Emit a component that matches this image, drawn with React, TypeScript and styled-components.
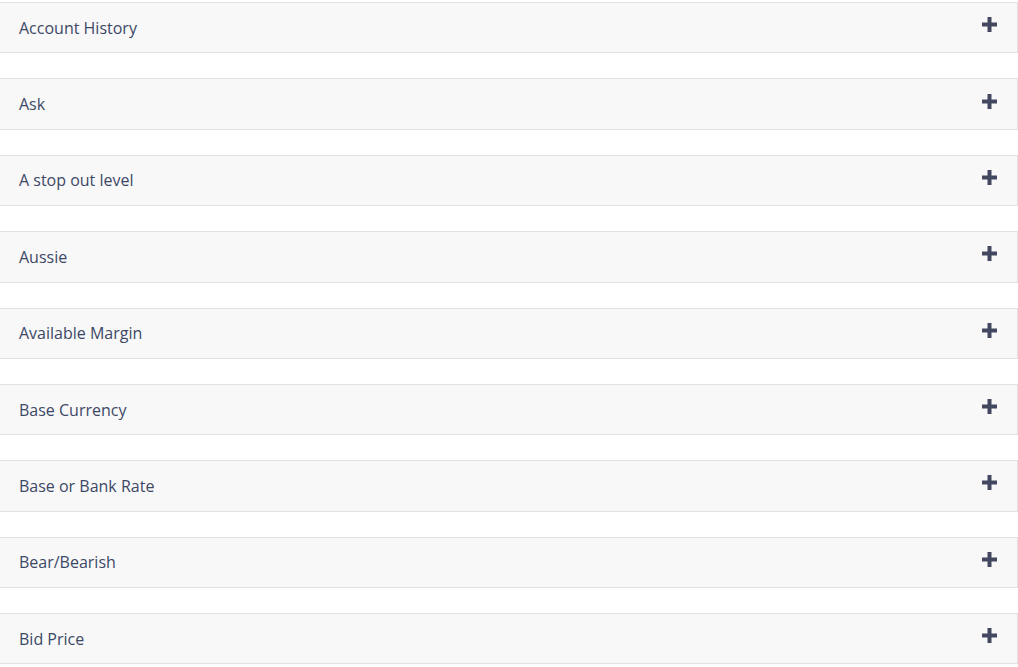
import React from 'react'
import styled, { createGlobalStyle } from 'styled-components'

const GlobalStyle = createGlobalStyle`
  body {
    margin: 0;
    background: #ffffff;
    font-family: "Open Sans", "Liberation Sans", sans-serif;
  }
`

const List = styled.div`
  padding-top: 2px;
`

const Item = styled.div`
  border: 1px solid #e1e1e1;
  border-left: none;
  background: #f8f8f8;
  height: 51.375px;
  box-sizing: border-box;
  margin-bottom: 25px;
`

const Header = styled.button`
  width: 100%;
  height: 100%;
  display: flex;
  align-items: center;
  justify-content: space-between;
  padding: 0 20px 0 19px;
  border: none;
  background: transparent;
  font-family: inherit;
  font-size: 16px;
  color: #3d4866;
  cursor: pointer;
  text-align: left;
`

const Title = styled.span`
  line-height: 24px;
`

const Plus = styled.svg`
  width: 15px;
  height: 15px;
  margin-top: -6px;
  flex-shrink: 0;
`

const terms = [
  'Account History',
  'Ask',
  'A stop out level',
  'Aussie',
  'Available Margin',
  'Base Currency',
  'Base or Bank Rate',
  'Bear/Bearish',
  'Bid Price',
]

const App: React.FC = () => {
  return (
    <>
      <GlobalStyle />
      <List>
        {terms.map((t) => (
          <Item key={t}>
            <Header>
              <Title>{t}</Title>
              <Plus viewBox="0 0 15 15">
                <rect x="5.5" y="0" width="4" height="15" fill="#43475f" />
                <rect x="0" y="5.5" width="15" height="4" fill="#43475f" />
              </Plus>
            </Header>
          </Item>
        ))}
      </List>
    </>
  )
}

export default App
